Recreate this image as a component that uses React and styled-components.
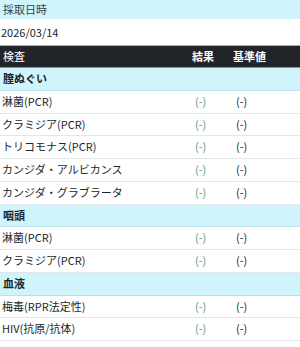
import React from "react";
import styled, { createGlobalStyle } from "styled-components";

const Global = createGlobalStyle`
  html, body { margin: 0; padding: 0; background: #fff; }
  body { font-family: "Noto Sans CJK JP", "Liberation Sans", sans-serif; color: #212529; }
`;

const Page = styled.div`
  width: 300px;
  font-size: 11px;
`;

const Caption = styled.div`
  background: #cff4fc;
  height: 19px;
  line-height: 19px;
  padding: 0 3px;
  color: #3a3f44;
`;

const DateRow = styled.div`
  height: 26px;
  line-height: 26px;
  padding: 0 1px;
  border-bottom: 1px solid #a9adb1;
  color: #212529;
`;

const Grid = styled.div`
  display: grid;
  grid-template-columns: 192px 41px 1fr;
`;

const HeadRow = styled(Grid)`
  background: #212529;
  color: #fff;
  height: 21px;
  line-height: 21px;
  border-bottom: 1px solid #8d9196;
`;

const HeadCell = styled.div`
  padding-left: ${(p) => (p.$first ? "3px" : "0")};
  font-weight: ${(p) => (p.$bold ? 700 : 400)};
`;

const Section = styled.div`
  background: #cff4fc;
  height: 21.75px;
  line-height: 21.75px;
  padding-left: 3px;
  font-weight: 700;
  border-bottom: 1px solid #b9dfe7;
`;

const Row = styled(Grid)`
  height: 21.75px;
  line-height: 21.75px;
  border-bottom: 1px solid #e3e5e8;
`;

const Cell = styled.div`
  padding-left: ${(p) => (p.$first ? "2px" : "3px")};
  color: ${(p) => (p.$green ? "#4e9c76" : "#212529")};
  white-space: nowrap;
`;

const data = [
  {
    name: "膣ぬぐい",
    items: ["淋菌(PCR)", "クラミジア(PCR)", "トリコモナス(PCR)", "カンジダ・アルビカンス", "カンジダ・グラブラータ"],
  },
  { name: "咽頭", items: ["淋菌(PCR)", "クラミジア(PCR)"] },
  { name: "血液", items: ["梅毒(RPR法定性)", "HIV(抗原/抗体)"] },
];

export default function App() {
  return (
    <Page>
      <Global />
      <Caption>採取日時</Caption>
      <DateRow>2026/03/14</DateRow>
      <HeadRow>
        <HeadCell $first>検査</HeadCell>
        <HeadCell $bold>結果</HeadCell>
        <HeadCell $bold>基準値</HeadCell>
      </HeadRow>
      {data.map((s) => (
        <React.Fragment key={s.name}>
          <Section>{s.name}</Section>
          {s.items.map((it, i) => (
            <Row key={i}>
              <Cell $first>{it}</Cell>
              <Cell $green>(-)</Cell>
              <Cell>(-)</Cell>
            </Row>
          ))}
        </React.Fragment>
      ))}
    </Page>
  );
}
